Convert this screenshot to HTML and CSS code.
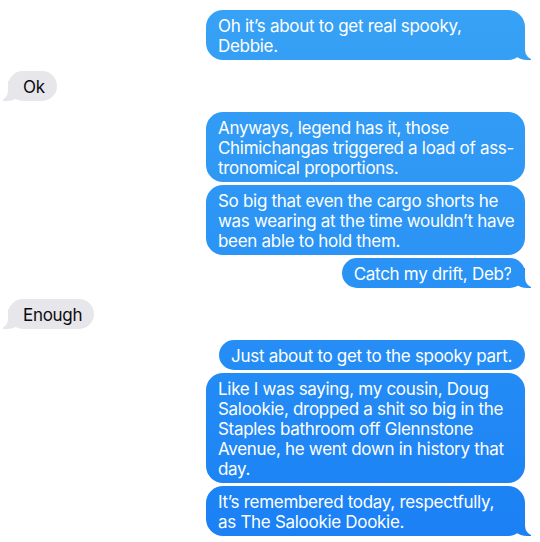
FILE: index.html
```html
<!DOCTYPE html>
<html lang="en">
<head>
<meta charset="utf-8">
<title>Messages</title>
<link rel="stylesheet" href="styles.css">
</head>
<body>
<main class="thread">
  <div class="row sent-row">
    <p class="bubble sent wide tail">Oh it’s about to get real spooky,<br>Debbie.</p>
  </div>
  <div class="row recv-row gap">
    <p class="bubble recv tail">Ok</p>
  </div>
  <div class="row sent-row gap">
    <p class="bubble sent wide">Anyways, legend has it, those<br>Chimichangas triggered a load of ass-<br>tronomical proportions.</p>
  </div>
  <div class="row sent-row">
    <p class="bubble sent wide">So big that even the cargo shorts he<br>was wearing at the time wouldn’t have<br>been able to hold them.</p>
  </div>
  <div class="row sent-row">
    <p class="bubble sent tail">Catch my drift, Deb?</p>
  </div>
  <div class="row recv-row gap">
    <p class="bubble recv tail">Enough</p>
  </div>
  <div class="row sent-row gap">
    <p class="bubble sent">Just about to get to the spooky part.</p>
  </div>
  <div class="row sent-row">
    <p class="bubble sent wide">Like I was saying, my cousin, Doug<br>Salookie, dropped a shit so big in the<br>Staples bathroom off Glennstone<br>Avenue, he went down in history that<br>day.</p>
  </div>
  <div class="row sent-row">
    <p class="bubble sent wide tail">It’s remembered today, respectfully,<br>as The Salookie Dookie.</p>
  </div>
</main>
</body>
</html>
```
FILE: styles.css
```css
html, body {
  margin: 0;
  padding: 0;
  background: #ffffff;
}

body {
  font-family: Inter, "Noto Sans", "Liberation Sans", sans-serif;
  font-size: 17px;
  line-height: 20px;
  letter-spacing: -0.3px;
  -webkit-font-smoothing: antialiased;
}

.thread {
  display: flex;
  flex-direction: column;
  gap: 3px;
  padding: 10px 15px 0 8px;
  overflow: hidden;
}

.row {
  display: flex;
}

.row.gap {
  margin-top: 8px;
}

.sent-row {
  justify-content: flex-end;
}

.recv-row {
  justify-content: flex-start;
}

.bubble {
  position: relative;
  margin: 0;
  padding: 6px 13px 4px 12px;
  border-radius: 17px;
  white-space: nowrap;
}

.sent {
  color: #ffffff;
  background: linear-gradient(to bottom, #38a2f5 0px, #2a93f5 260px, #1a80f5 542px);
  background-attachment: fixed;
}

.sent.wide {
  width: 294px;
}

.recv {
  color: #0b0b0b;
  background: #e6e6eb;
  padding: 6px 12px 4px 15px;
}

.tail::before,
.tail::after {
  content: "";
  position: absolute;
  bottom: 0;
  height: 20px;
}

.sent.tail::before {
  right: -6px;
  width: 20px;
  background: inherit;
  background-attachment: fixed;
  border-bottom-left-radius: 16px 14px;
}

.sent.tail::after {
  right: -26px;
  width: 26px;
  background: #ffffff;
  border-bottom-left-radius: 10px;
}

.recv.tail::before {
  left: -5px;
  width: 20px;
  background: #e6e6eb;
  border-bottom-right-radius: 16px 14px;
}

.recv.tail::after {
  left: -26px;
  width: 26px;
  background: #ffffff;
  border-bottom-right-radius: 10px;
}
```
